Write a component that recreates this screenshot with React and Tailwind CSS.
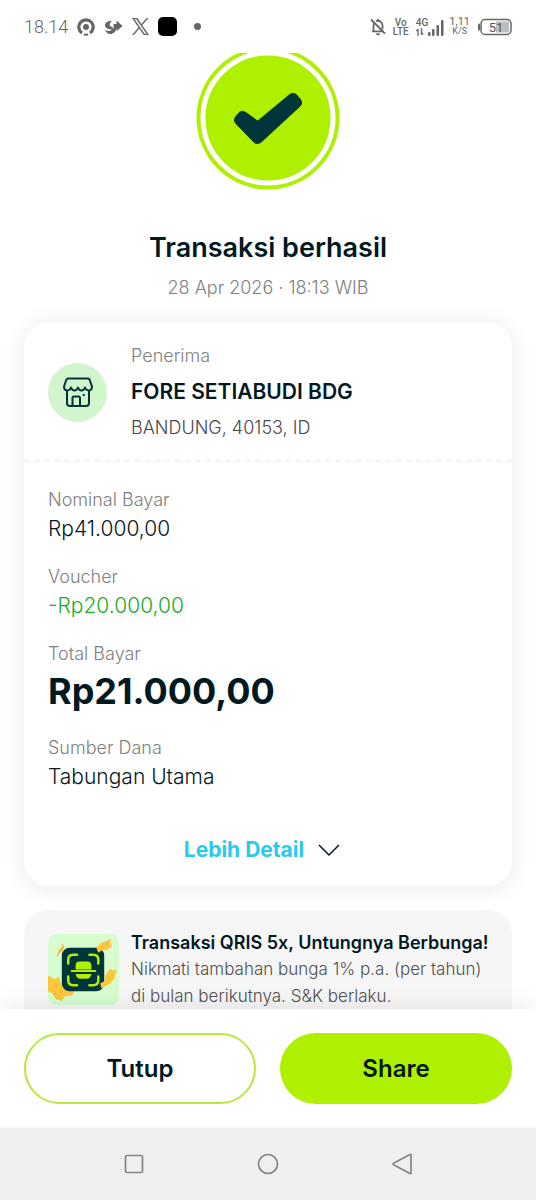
import { useState } from 'react';

const details = [
  { label: 'Nominal Bayar', value: 'Rp41.000,00', style: 'text-[21px] leading-[34px] text-[#06191f]' },
  { label: 'Voucher', value: '-Rp20.000,00', style: 'text-[21px] leading-[34px] text-[#22aa2a]' },
  { label: 'Total Bayar', value: 'Rp21.000,00', style: 'text-4xl leading-[51px] font-bold text-[#02191f]' },
  { label: 'Sumber Dana', value: 'Tabungan Utama', style: 'text-[21px] leading-[34px] text-[#06191f]' },
];

function StatusBar() {
  return (
    <div className="flex h-[53px] shrink-0 items-center justify-between px-6 font-[Roboto,sans-serif] text-[#666]">
      <div className="flex items-center gap-[9px]">
        <span className="text-lg font-light">18.14</span>
        <svg className="size-[18px]" viewBox="0 0 18 18" fill="none" stroke="currentColor">
          <path d="M5 15A7.200 7.200 0 1 1 13 15" strokeWidth="3.200" />
          <circle cx="9" cy="9" r="3" fill="currentColor" stroke="none" />
          <path d="M6.800 16.600h4.400" strokeWidth="2" />
        </svg>
        <svg className="h-[18px] w-[19px]" viewBox="0 0 19 18" fill="currentColor">
          <path d="M8 3C4 2.600 1 4.400 1 7.200c0 2.600 2.500 3.600 5 4 1.500.3 2.500.6 3 1.300.6-2-.2-3.300-2-4C5.200 7.800 5 5 8 3z" />
          <path d="M12.500 2.500 18.500 8l-6 5.200V10H9.500V6h3z" />
          <path d="M1.200 11.800c2.600 2 6.500 1.800 9.300-2.800l2 1c-.5 3.800-3.200 6-6.200 6-2.600 0-4.600-1.800-5.100-4.200z" />
        </svg>
        <svg className="size-[17px]" viewBox="0 0 24 24" fill="currentColor" stroke="currentColor" strokeWidth="0.600">
          <path d="M14.234 10.162 22.977 0h-2.072l-7.591 8.824L7.251 0H.258l9.168 13.343L.258 24H2.330l8.016-9.318L16.749 24h6.993zm-2.837 3.299-.929-1.329L3.076 1.560h3.182l5.965 8.532.929 1.329 7.754 11.090h-3.182z" />
        </svg>
        <span className="size-[19px] rounded-[5px] bg-black" />
        <span className="ml-2 size-[7px] rounded-full bg-[#666]" />
      </div>

      <div className="flex items-center">
        <svg className="h-[18px] w-4" viewBox="0 0 16 18" fill="none" stroke="currentColor" strokeWidth="1.800">
          <path d="M2 13.300h12M3.500 13V7.500c0-1 .3-2 .9-2.800M6 3.300c3-1.500 6.500.5 6.500 4.200V11M8 1v2M1 1.500l14 14" />
          <path d="M6.300 16.200h3.400" />
        </svg>
        <span className="ml-[7px] text-center text-[10px] leading-[9px] font-medium">
          Vo
          <br />
          LTE
        </span>
        <span className="ml-[7px] flex items-end">
          <span className="flex flex-col items-start text-[10px] leading-[9px] font-medium">
            4G
            <svg className="mt-px h-2 w-2" viewBox="0 0 8 8" fill="none" stroke="currentColor" strokeWidth="1.300">
              <path d="M2 8V1.200M.4 3 2 1.200M5.500 0v6.800M7.200 5 5.500 6.800" />
            </svg>
          </span>
          <svg className="h-[17px] w-4" viewBox="0 0 16 17" fill="currentColor">
            <rect x="0" y="13" width="2.500" height="4" rx="1" />
            <rect x="4" y="10" width="2.500" height="7" rx="1" />
            <rect x="8.500" y="6" width="2.500" height="11" rx="1" />
            <rect x="13" y="1" width="2.500" height="16" rx="1" />
          </svg>
        </span>
        <span className="ml-[5px] text-center text-[11px] leading-[9px]">
          1,11
          <br />
          <span className="text-[9px]">K/S</span>
        </span>
        <svg className="ml-2 h-[18px] w-[34px]" viewBox="0 0 34 18">
          <rect x="0" y="5.500" width="2" height="7" rx="1" fill="#666" />
          <rect x="3" y="1.500" width="30" height="15" rx="4" fill="none" stroke="#666" strokeWidth="1.500" />
          <rect x="18" y="3.500" width="13" height="11" fill="#bdbdbd" />
          <text x="18" y="13.500" textAnchor="middle" fontSize="13" fill="#555">51</text>
        </svg>
      </div>
    </div>
  );
}

function SuccessBadge() {
  return (
    <svg className="-mt-[7px] size-36 shrink-0" viewBox="0 0 144 144">
      <circle cx="72" cy="72" r="71.500" fill="#aef000" />
      <circle cx="72" cy="72" r="65" fill="none" stroke="#fff" strokeWidth="5" />
      <path
        d="M46.500 70.500 43.500 74 61.500 92.500 100.500 56.500 97 52.500 62 81.500z"
        fill="#00363a"
        stroke="#00363a"
        strokeWidth="11"
        strokeLinejoin="round"
      />
    </svg>
  );
}

function StoreIcon() {
  return (
    <svg className="size-8" viewBox="0 0 32 32" fill="none" stroke="#04343a" strokeWidth="2" strokeLinecap="round" strokeLinejoin="round">
      <path d="M6 2.500h20c.8 0 1.300.4 1.600 1.100L30 10.500c0 5-5.600 5-7 1-1.400 4-5.600 4-7 0-1.400 4-5.600 4-7 0-1.400 4-7 4-7-1l2.400-6.900C4.700 2.900 5.200 2.500 6 2.500z" />
      <path d="M5 15v12c0 2 1 3 3 3h16c2 0 3-1 3-3V15" />
      <path d="M10.500 30v-8c0-1 .5-1.500 1.500-1.500h4.500c1 0 1.500.5 1.500 1.500v8" />
      <path d="M21.500 19h.5" />
    </svg>
  );
}

function PromoIcon() {
  return (
    <svg className="size-[71px] shrink-0" viewBox="0 0 72 72">
      <rect width="72" height="72" rx="9" fill="#d6fcd0" />
      <path d="M15 9c2 5 1 8-3 10l-3 5c0-5 2-8 5-11z" fill="#f5b93a" />
      <path d="M0 42l7 4 4-3 2 7 5 7 8 1-1 4-8 1-3 5-6-2-4-6-4-2z" fill="#fcc63d" />
      <rect x="14" y="14" width="43" height="44" rx="8" fill="#00363a" />
      <path d="M49 14 54 9l10-4-1 5 2 2-5 4-6 1-3 2z" fill="#fcc63d" />
      <path d="M58 42l5-7 3 2 4-1-3 10-5 5-8 4-1-5 4-2z" fill="#fcc63d" />
      <path d="M8 52l1 1M12 58l1 1M7 60l1 1M59 10l1 1M62 44l1 1" stroke="#ef9f2f" strokeWidth="1.500" />
      <g fill="none" stroke="#b0f000" strokeWidth="2.500" strokeLinecap="round">
        <path d="M20.500 30v-4q0-5 5-5h4M42 21h4q5 0 5 5v4M51 43v4q0 5-5 5h-4M29.500 52h-4q-5 0-5-5v-4" />
        <path d="M24 37.500h24" strokeWidth="2" />
      </g>
      <path d="M28 36v-4q0-4 4-4h8q4 0 4 4v4zM28 40.500h16q-1 5-5 5h-6q-4 0-5-5z" fill="#b0f000" />
    </svg>
  );
}

function TransactionCard() {
  const [open, setOpen] = useState(false);

  return (
    <section className="mt-[22px] w-full rounded-3xl bg-white shadow-[0_2px_24px_rgba(0,0,0,0.09)]">
      <div className="flex items-center gap-6 border-b-2 border-dashed border-[#f3f3f3] px-6 pt-[22px] pb-5">
        <div className="flex size-[59px] shrink-0 items-center justify-center rounded-full bg-[#d2f5cd]">
          <StoreIcon />
        </div>
        <div className="flex flex-col gap-2.5 text-lg leading-6 font-[350]">
          <p className="text-[#808080]">Penerima</p>
          <h2 className="text-[21px] leading-7 font-semibold text-[#02191f]">FORE SETIABUDI BDG</h2>
          <p className="text-[#484848]">BANDUNG, 40153, ID</p>
        </div>
      </div>

      <dl className="flex flex-col gap-[19px] px-6 pt-[26px] font-[350]">
        {details.map((item) => (
          <div key={item.label}>
            <dt className="text-lg leading-6 text-[#808080]">{item.label}</dt>
            <dd className={item.style}>{item.value}</dd>
          </div>
        ))}
      </dl>

      <button
        type="button"
        aria-expanded={open}
        onClick={() => setOpen(!open)}
        className="mx-auto mt-10 mb-5 flex items-center gap-3.5 pr-3 text-[21px] leading-8 font-bold text-[#2acbea]"
      >
        Lebih Detail
        <svg className="h-3 w-[22px]" viewBox="0 0 22 12" fill="none" stroke="#06191f" strokeWidth="1.500" strokeLinejoin="round">
          <path d="M1 1l10 10L21 1" />
        </svg>
      </button>
    </section>
  );
}

export default function App() {
  return (
    <div className="flex h-screen flex-col overflow-hidden bg-white font-[Inter,sans-serif]">
      <StatusBar />

      <main className="flex min-h-0 flex-1 flex-col items-center overflow-hidden px-6">
        <SuccessBadge />
        <h1 className="mt-10 text-[27px] leading-9 font-semibold text-[#02191f]">Transaksi berhasil</h1>
        <p className="mt-2.5 text-lg leading-6 font-[350] text-[#808080]">28 Apr 2026 · 18:13 WIB</p>

        <TransactionCard />

        <section className="mt-6 flex w-full shrink-0 items-center gap-3 rounded-3xl bg-[#f6f6f6] pt-[19px] pr-5 pb-6 pl-6">
          <PromoIcon />
          <div className="text-[17px] leading-[27px]">
            <h3 className="text-lg leading-[27px] font-semibold whitespace-nowrap text-[#02191f]">Transaksi QRIS 5x, Untungnya Berbunga!</h3>
            <p className="font-[350] text-[#505050]">Nikmati tambahan bunga 1% p.a. (per tahun) di bulan berikutnya. S&amp;K berlaku.</p>
          </div>
        </section>
      </main>

      <footer className="relative grid shrink-0 grid-cols-2 gap-6 bg-white p-6 text-2xl font-semibold text-[#02191f] shadow-[0_0_24px_rgba(0,0,0,0.1)]">
        <button type="button" className="h-[71px] rounded-full border-2 border-[#b8e83c]">
          Tutup
        </button>
        <button type="button" className="h-[71px] rounded-full bg-[#aef000]">
          Share
        </button>
      </footer>

      <nav className="relative shrink-0 bg-[#efefef] shadow-[0_-1px_4px_rgba(0,0,0,0.05)]">
        <div className="mx-auto grid h-[72px] w-3/4 grid-cols-3 place-items-center text-[#858585]">
          <button type="button" aria-label="Recent apps">
            <svg className="size-[22px]" viewBox="0 0 22 22" fill="none" stroke="currentColor" strokeWidth="1.700">
              <rect x="2.500" y="2.500" width="17" height="17" rx="1.500" />
            </svg>
          </button>
          <button type="button" aria-label="Home">
            <svg className="size-[22px]" viewBox="0 0 22 22" fill="none" stroke="currentColor" strokeWidth="1.700">
              <circle cx="11" cy="11" r="9.500" />
            </svg>
          </button>
          <button type="button" aria-label="Back">
            <svg className="size-[22px]" viewBox="0 0 22 22" fill="none" stroke="currentColor" strokeWidth="1.700" strokeLinejoin="round">
              <path d="M20 2v18q0 1-1 .5L2.500 11.700q-1-.7 0-1.400L19 1.500q1-.5 1 .5z" />
            </svg>
          </button>
        </div>
      </nav>
    </div>
  );
}
